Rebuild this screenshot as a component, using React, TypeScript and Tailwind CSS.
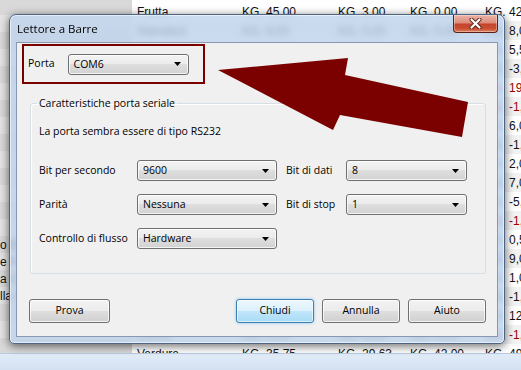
import React from "react";

type Row = { name: string; a: string; b: string; c: string; d: string; red?: boolean };

const rows: Row[] = [
  { name: "Frutta", a: "KG. 45,00", b: "KG. 3,00", c: "KG. 0,00", d: "KG. 42,00" },
  { name: "Standard", a: "KG. 8,00", b: "KG. 0,00", c: "KG. 0,00", d: "KG. 8,00" },
  { name: "Mele", a: "KG. 12,50", b: "KG. 7,00", c: "KG. 0,00", d: "KG. 5,50" },
  { name: "Pere", a: "KG. 4,00", b: "KG. 7,00", c: "KG. 0,00", d: "KG. -3,00" },
  { name: "Arance", a: "KG. 25,00", b: "KG. 6,00", c: "KG. 0,00", d: "KG. 19,00", red: true },
  { name: "Limoni", a: "KG. 2,00", b: "KG. 3,50", c: "KG. 0,00", d: "KG. -1,50", red: true },
  { name: "Banane", a: "KG. 10,00", b: "KG. 4,00", c: "KG. 0,00", d: "KG. 6,00" },
  { name: "Kiwi", a: "KG. 1,00", b: "KG. 2,00", c: "KG. 0,00", d: "KG. -1,00" },
  { name: "Uva", a: "KG. 5,00", b: "KG. 3,00", c: "KG. 0,00", d: "KG. 2,00" },
  { name: "Fragole", a: "KG. 9,00", b: "KG. 2,00", c: "KG. 0,00", d: "KG. 7,00" },
  { name: "Ciliegie", a: "KG. 1,00", b: "KG. 6,00", c: "KG. 0,00", d: "KG. -5,00" },
  { name: "Pesche", a: "KG. 2,80", b: "KG. 4,00", c: "KG. 0,00", d: "KG. -1,20", red: true },
  { name: "Albicocche", a: "KG. 3,50", b: "KG. 3,00", c: "KG. 0,00", d: "KG. 0,50" },
  { name: "Meloni", a: "KG. 15,00", b: "KG. 6,00", c: "KG. 0,00", d: "KG. 9,00" },
  { name: "Prugne", a: "KG. 4,00", b: "KG. 3,00", c: "KG. 0,00", d: "KG. 1,00" },
  { name: "Fichi", a: "KG. 1,00", b: "KG. 2,00", c: "KG. 0,00", d: "KG. -1,00" },
  { name: "Ananas", a: "KG. 20,00", b: "KG. 8,00", c: "KG. 0,00", d: "KG. 12,00" },
  { name: "Cocco", a: "KG. 0,00", b: "KG. 1,00", c: "KG. 0,00", d: "KG. -1,00", red: true },
  { name: "Verdure", a: "KG. 35,75", b: "KG. 29,63", c: "KG. 42,00", d: "KG. 49,12" },
];

const leftItems = ["", "", "", "", "", "", "", "", "", "", "", "", "", "", "o Bianco", "e Rosso", "a Casa", "lla Mela", "", "", ""];

function Combo({ value, w }: { value: string; w: string }) {
  return (
    <div
      className={`${w} h-[21px] flex-none rounded-[3px] border border-[#707070] bg-[linear-gradient(to_bottom,#f3f3f3_0%,#ebebeb_50%,#dedede_50%,#d2d2d2_100%)] shadow-[inset_0_0_0_1px_rgba(255,255,255,0.75)] flex items-center justify-between pl-[5px] pr-[7px]`}
    >
      <span className="leading-none">{value}</span>
      <svg width="7" height="4" viewBox="0 0 7 4">
        <path d="M0 0h7L3.5 4z" fill="#000" />
      </svg>
    </div>
  );
}

function Btn({ label, w, focused }: { label: string; w: string; focused?: boolean }) {
  return (
    <div
      className={`${w} h-[24px] rounded-[3px] border flex items-center justify-center ${
        focused
          ? "border-[#3c7fb1] bg-[linear-gradient(to_bottom,#ecf7fd_0%,#dcf1fc_50%,#c1e6fb_50%,#a9daf6_100%)] shadow-[inset_0_0_0_1px_rgba(255,255,255,0.6),0_0_3px_#7fc4ee]"
          : "border-[#707070] bg-[linear-gradient(to_bottom,#f3f3f3_0%,#ebebeb_50%,#dedede_50%,#d0d0d0_100%)] shadow-[inset_0_0_0_1px_rgba(255,255,255,0.75)]"
      }`}
    >
      {label}
    </div>
  );
}

export default function App() {
  return (
    <div className="relative w-[521px] h-[370px] overflow-hidden bg-white font-['Liberation_Sans',Arial,sans-serif] text-[12px] text-[#111]">
      {/* sfondo: tabella */}
      <div className="h-[353px] overflow-hidden flex">
        <div className="w-[132px] shrink-0 bg-[#dcdcdc] flex flex-col -mt-[2px]">
          {leftItems.map((t, i) => (
            <div key={i} className={`h-[17px] shrink-0 flex items-center whitespace-nowrap ${i % 2 ? "bg-[#e4e4e4]" : "bg-[#d9d9d9]"}`}>
              {t}
            </div>
          ))}
        </div>
        <div className="flex-1 flex flex-col pt-[2px]">
          {rows.map((r, i) => (
            <div
              key={i}
              className={`h-[19px] shrink-0 grid grid-cols-[105px_96px_72px_77px_1fr] items-center whitespace-nowrap ${
                i % 2 ? "bg-[#f2f2f2]" : "bg-white"
              }`}
            >
              <span className="pl-[5px]">{r.name}</span>
              <span className="pl-[5px]">{r.a}</span>
              <span className="pl-[5px]">{r.b}</span>
              <span className="pl-[5px]">{r.c}</span>
              <span className={`pl-[3px] ${r.red ? "text-[#9a0000]" : ""}`}>{r.d}</span>
            </div>
          ))}
        </div>
      </div>
      <div className="h-[17px] border-t border-[#b7cbe4] bg-linear-to-b from-[#e2ecf8] to-[#d3e1f2]" />

      {/* finestra di dialogo */}
      <div className="absolute left-[9px] top-[14px] w-[496px] h-[330px] rounded-t-[7px] rounded-b-[5px] border border-[#4d6482] bg-[#bed3ed]/80 backdrop-blur-[3px] shadow-[0_2px_10px_rgba(0,0,0,0.6),inset_0_0_0_1px_rgba(255,255,255,0.55)] flex flex-col font-['Open_Sans',sans-serif] text-[10.5px] text-black">
        <div className="h-[27px] shrink-0 flex items-start justify-between pl-[7px] pr-[6px]">
          <span className="mt-[5px] text-[11.5px]">Lettore a Barre</span>
          <div className="w-[45px] h-[18px] rounded-b-[4px] border border-t-0 border-[#5a2216] bg-[linear-gradient(to_bottom,#ebb3a7_0%,#dc8c7a_48%,#c4432b_52%,#c94f31_80%,#e0825f_100%)] shadow-[inset_0_0_0_1px_rgba(255,255,255,0.35)] flex items-center justify-center">
            <svg width="13" height="11" viewBox="0 0 13 11">
              <path d="M2.5 1.5 L10.5 9.5 M10.5 1.5 L2.5 9.5" stroke="#5e2318" strokeWidth="4" strokeLinecap="round" />
              <path d="M2.5 1.5 L10.5 9.5 M10.5 1.5 L2.5 9.5" stroke="#fff" strokeWidth="2.2" strokeLinecap="round" />
            </svg>
          </div>
        </div>

        <div className="mx-[6px] mb-[6px] flex-1 border border-[#8898b0] bg-[#f0f0f0] flex flex-col">
          {/* porta evidenziata */}
          <div className="ml-[5px] mt-[1px] w-[183px] h-[40px] border-2 border-[#7a0000] flex items-center gap-[13px] pl-[4px]">
            <span>Porta</span>
            <Combo value="COM6" w="w-[121px]" />
          </div>

          <fieldset className="ml-[13px] mt-[11px] w-[456px] h-[179px] rounded-[3px] border border-[#d5dfe5] shadow-[inset_1px_1px_0_#fff] pl-[6px]">
            <legend className="px-[2px] leading-[16px]">Caratteristiche porta seriale</legend>
            <div className="pl-[2px] flex flex-col">
              <div className="mt-[12px] leading-[16px]">La porta sembra essere di tipo RS232</div>
              <div className="mt-[21px] grid grid-cols-[98px_140px_9px_60px_121px] grid-rows-[21px_21px_21px] gap-y-[13px] items-center">
                <span>Bit per secondo</span>
                <Combo value="9600" w="w-[140px]" />
                <span />
                <span>Bit di dati</span>
                <Combo value="8" w="w-[121px]" />
                <span>Parità</span>
                <Combo value="Nessuna" w="w-[140px]" />
                <span />
                <span>Bit di stop</span>
                <Combo value="1" w="w-[121px]" />
                <span>Controllo di flusso</span>
                <Combo value="Hardware" w="w-[140px]" />
              </div>
            </div>
          </fieldset>

          <div className="mt-[25px] flex items-center pl-[12px] pr-[11px]">
            <Btn label="Prova" w="w-[81px]" />
            <div className="ml-auto flex gap-[8px]">
              <Btn label="Chiudi" w="w-[78px]" focused />
              <Btn label="Annulla" w="w-[78px]" />
              <Btn label="Aiuto" w="w-[78px]" />
            </div>
          </div>
        </div>
      </div>

      {/* freccia */}
      <svg className="absolute left-0 top-0 pointer-events-none" width="521" height="370" viewBox="0 0 521 370">
        <polygon points="218,70 348,58 345,75 468,102 462,137 340,115 333,130" fill="#7b0000" />
      </svg>
    </div>
  );
}
